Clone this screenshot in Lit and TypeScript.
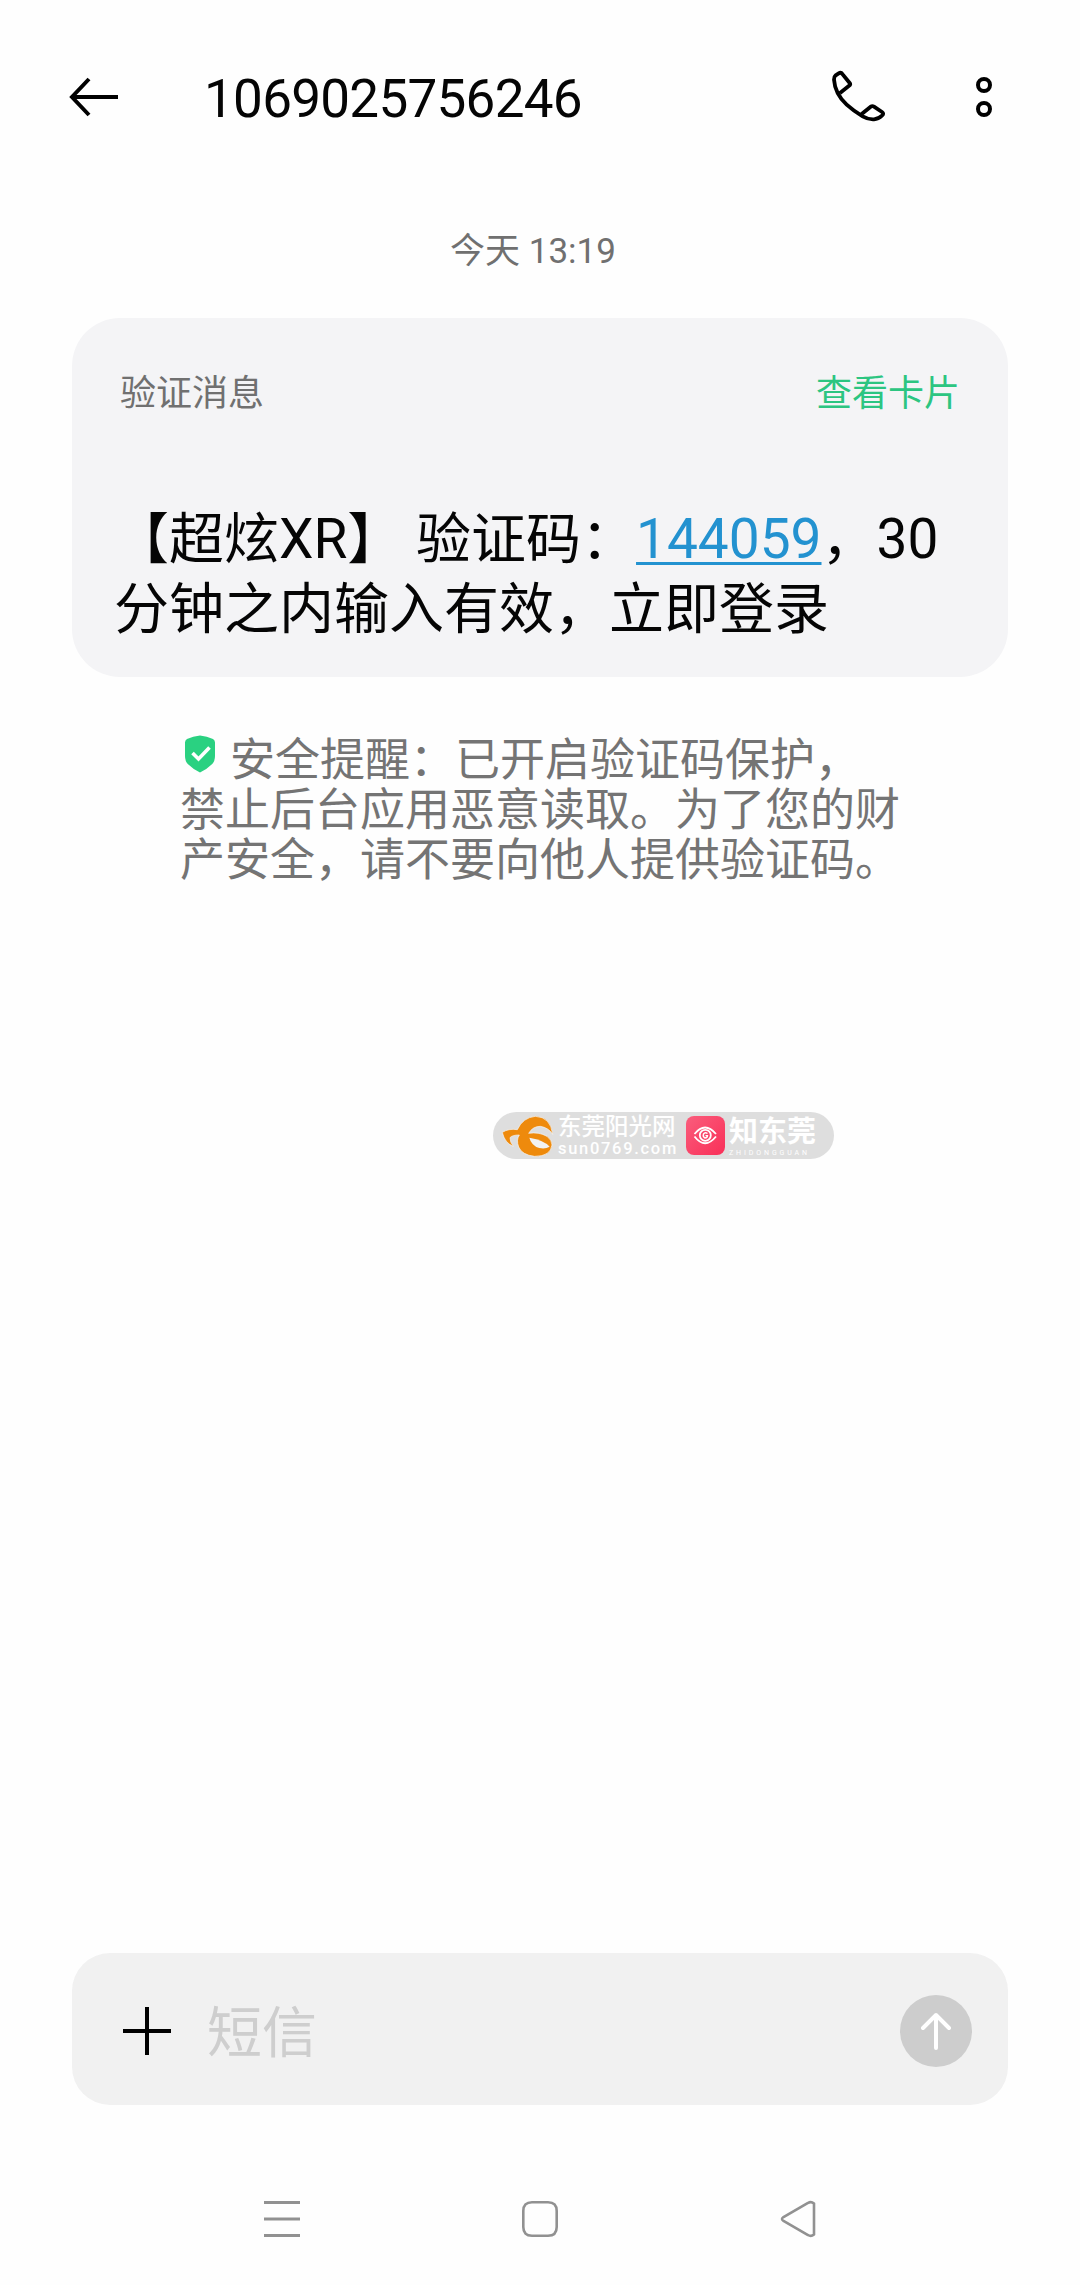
import { LitElement, html, css } from "lit";
import { customElement } from "lit/decorators.js";

const FONT = css`Roboto, "Noto Sans CJK SC", sans-serif`;

@customElement("sms-header")
class SmsHeader extends LitElement {
  static styles = css`
    :host { display: flex; align-items: center; height: 194px; padding: 0 88px 0 68px; box-sizing: border-box; }
    svg { display: block; flex: none; fill: none; stroke: #000; }
    .title { flex: 1; margin: 4px 0 0 84px; font: 400 53px/64px ${FONT}; letter-spacing: -0.72px; color: #050505; white-space: nowrap; }
    .more { margin-left: 86px; }
  `;
  render() {
    return html`
      <svg width="52" height="44" viewBox="0 0 52 44" stroke-width="4"><path d="M50 22H4.500M21 4L4 22L21 40" /></svg>
      <div class="title">1069025756246</div>
      <svg width="60" height="56" viewBox="150 90 180 168" stroke-width="11.500" stroke-linejoin="round">
        <path d="M180 162L209 139Q212 136 209 132L188 106Q183 99 176 103L167 109Q162 113 162 122Q165 165 200 197Q222 217 248 232Q265 242 282 241Q295 240 306 230Q313 224 306 219L282 203Q277 200 272 203L245 225" />
      </svg>
      <svg class="more" width="16" height="40" viewBox="0 0 16 40" stroke-width="4"><circle cx="8" cy="8" r="6" /><circle cx="8" cy="32" r="6" /></svg>
    `;
  }
}

@customElement("sms-card")
class SmsCard extends LitElement {
  static styles = css`
    :host { display: flex; flex-direction: column; box-sizing: border-box; height: 359px; margin: 0 72px; padding: 50px 42px 0 42px; border-radius: 48px; background: #f4f4f6; font-family: ${FONT}; }
    .head { display: flex; justify-content: space-between; padding: 0 6px; font-size: 36px; line-height: 52px; color: #707070; }
    .link { color: #2cc581; }
    .body { margin-top: 84px; font-size: 55px; line-height: 70px; color: #050505; white-space: nowrap; }
    .code { color: #2392d0; text-decoration: underline; text-decoration-thickness: 3px; text-underline-offset: 4px; }
  `;
  render() {
    return html`
      <div class="head"><span>验证消息</span><span class="link">查看卡片</span></div>
      <div class="body">【超炫XR】 验证码：<span class="code">144059</span>，30<br />分钟之内输入有效，立即登录</div>
    `;
  }
}

@customElement("safety-tip")
class SafetyTip extends LitElement {
  static styles = css`
    :host { display: block; margin: 59px 0 0 180px; font: 400 45px/50px ${FONT}; color: #747474; white-space: nowrap; }
    .first { display: flex; }
    svg { display: block; margin: -1px 14px 0 4px; flex: none; }
  `;
  render() {
    return html`
      <div class="first">
        <svg width="32" height="38" viewBox="0 0 32 38">
          <path fill="#2ad181" d="M16 .5Q9 1 3 4Q1 5 1 7.500V21Q1 27 5 30Q10 35 16 37.500Q22 35 27 30Q31 27 31 21V7.500Q31 5 29 4Q23 1 16 .5Z" />
          <path fill="none" stroke="#fff" stroke-width="3.600" d="M8.500 18L14.500 24L25.500 12.500" />
        </svg>
        <span>安全提醒：已开启验证码保护，</span>
      </div>
      <div>禁止后台应用恶意读取。为了您的财</div>
      <div>产安全，请不要向他人提供验证码。</div>
    `;
  }
}

@customElement("source-badge")
class SourceBadge extends LitElement {
  static styles = css`
    :host { display: flex; align-items: center; box-sizing: border-box; width: 341px; height: 47px; margin: 0 0 0 493px; padding-left: 9px; border-radius: 24px; background: #dedede; color: #fff; font-family: ${FONT}; white-space: nowrap; }
    svg { display: block; flex: none; }
    .site { width: 118px; margin-left: 4px; }
    .name { font-size: 23.500px; line-height: 26px; font-weight: 500; }
    .url { font-size: 16.500px; line-height: 18px; letter-spacing: 1.7px; font-weight: 500; }
    .app { margin: 0 4px 0 10px; }
    .brand { font-size: 29px; line-height: 34px; font-weight: 700; }
    .roman { font-size: 7px; line-height: 8px; letter-spacing: 2.9px; }
  `;
  render() {
    return html`
      <svg width="52" height="42" viewBox="0 0 156 126">
        <path fill="#ee8a0c" stroke="#f6f6f6" stroke-width="2" d="M1 52Q20 40 46 44Q62 8 100 4Q146 6 152 58Q140 38 115 34Q92 34 80 55Q110 50 135 64Q150 75 150 90Q146 124 98 124Q60 120 50 96Q42 75 52 60Q30 60 24 68Q24 82 34 94Q8 84 1 52Z" />
        <path fill="#f2f2f2" d="M82 68Q88 92 112 99Q130 103 143 95Q128 76 82 68Z" />
      </svg>
      <div class="site"><div class="name">东莞阳光网</div><div class="url">sun0769.com</div></div>
      <svg class="app" width="39" height="39" viewBox="0 0 39 39">
        <defs><linearGradient id="g" x1="0" y1="0" x2="1" y2="1"><stop offset="0" stop-color="#fa5d7c" /><stop offset="1" stop-color="#f92f58" /></linearGradient></defs>
        <rect width="39" height="39" rx="8" fill="url(#g)" />
        <g fill="none" stroke="#fff" stroke-width="1.800">
          <path d="M8.500 18Q19 5 30 18M8.500 20.500Q19 34 30 20.500" /><circle cx="19.300" cy="19.300" r="5.500" /><path stroke-width="1.400" d="M21.500 17.500Q19 15.800 17.500 18Q16.500 21 19 22Q21.500 22 21.500 19.600H19.500" />
        </g>
      </svg>
      <div><div class="brand">知东莞</div><div class="roman">ZHIDONGGUAN</div></div>
    `;
  }
}

@customElement("sms-composer")
class SmsComposer extends LitElement {
  static styles = css`
    :host { display: flex; align-items: center; box-sizing: border-box; height: 152px; margin: 0 72px; padding: 4px 36px 0 51px; border-radius: 38px; background: #f1f1f1; font: 400 55px/80px ${FONT}; color: #cecece; }
    svg { display: block; flex: none; fill: none; }
    .hint { flex: 1; margin: 4px 0 0 36px; }
  `;
  render() {
    return html`
      <svg width="48" height="48" viewBox="0 0 48 48" stroke="#000" stroke-width="4"><path d="M24 0V48M0 24H48" /></svg>
      <span class="hint">短信</span>
      <svg width="72" height="72" viewBox="0 0 72 72"><circle cx="36" cy="36" r="36" fill="#cdcdcd" />
        <path stroke="#fff" stroke-width="4" stroke-linecap="round" stroke-linejoin="round" d="M36 53V20M23 33L36 20L49 33" /></svg>
    `;
  }
}

@customElement("system-nav")
class SystemNav extends LitElement {
  static styles = css`
    :host { display: flex; justify-content: space-between; align-items: center; padding: 0 263px; }
    svg { display: block; fill: none; stroke: #919191; }
  `;
  render() {
    return html`
      <svg width="38" height="38" viewBox="0 0 38 38" stroke-width="3"><path d="M1 2.500H37M1 19H37M1 35.500H37" /></svg>
      <svg width="38" height="38" viewBox="0 0 38 38" stroke-width="2.600"><path d="M11 2.300H27Q35.700 2.300 35.700 11V27Q35.700 35.700 27 35.700H11Q2.300 35.700 2.300 27V11Q2.300 2.300 11 2.300Z" /></svg>
      <svg width="38" height="38" viewBox="0 0 38 38" stroke-width="2.600"><path d="M29 3Q32 1 35 3.500V34.500Q32 37 29 35L4.500 21Q1.500 19 4.500 17Z" /></svg>
    `;
  }
}

@customElement("app-root")
class AppRoot extends LitElement {
  static styles = css`
    :host { display: flex; flex-direction: column; width: 1080px; height: 2285px; overflow: hidden; background: #fefefe; }
    .date { height: 124px; padding-top: 32px; box-sizing: border-box; padding-right: 14px; text-align: center; font: 400 35px/52px ${FONT}; color: #707070; }
    source-badge { margin-top: 226px; }
    sms-composer { margin-top: auto; }
    system-nav { margin-top: 95px; height: 38px; margin-bottom: 47px; }
  `;
  render() {
    return html`
      <sms-header></sms-header>
      <div class="date">今天 13:19</div>
      <sms-card></sms-card>
      <safety-tip></safety-tip>
      <source-badge></source-badge>
      <sms-composer></sms-composer>
      <system-nav></system-nav>
    `;
  }
}
